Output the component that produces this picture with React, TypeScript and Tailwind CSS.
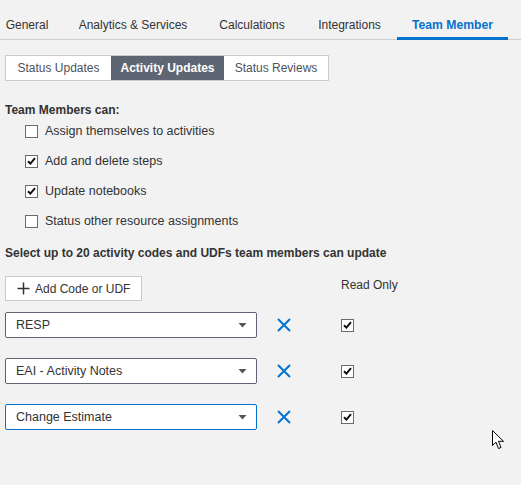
import React from "react";

const Check = ({ checked }: { checked: boolean }) => (
  <div className="w-[13px] h-[13px] border border-[#6b6b6b] bg-white flex items-center justify-center shrink-0">
    {checked && (
      <svg width="9" height="8" viewBox="0 0 9 8">
        <path d="M1 4.2 L3.4 6.6 L8 1.2" fill="none" stroke="#111" strokeWidth="2" />
      </svg>
    )}
  </div>
);

const tabs = [
  { label: "General", active: false, w: "w-[74px]" },
  { label: "Analytics & Services", active: false, w: "w-[138px]" },
  { label: "Calculations", active: false, w: "w-[100px]" },
  { label: "Integrations", active: false, w: "w-[95px]" },
  { label: "Team Member", active: true, w: "w-[111px]" },
];

const perms = [
  { label: "Assign themselves to activities", checked: false },
  { label: "Add and delete steps", checked: true },
  { label: "Update notebooks", checked: true },
  { label: "Status other resource assignments", checked: false },
];

const codes = [
  { label: "RESP", focused: false },
  { label: "EAI - Activity Notes", focused: false },
  { label: "Change Estimate", focused: true },
];

export default function App() {
  return (
    <div
      className="relative w-[521px] h-[485px] bg-[#f2f2f2] text-[12px] text-[#333333] overflow-hidden"
      style={{ fontFamily: '"Liberation Sans", Arial, sans-serif' }}
    >
      <div className="h-[40px] border-b border-[#cfcfcf]">
        <div className="flex -ml-[10px] h-[40px]">
          {tabs.map((t) => (
            <div
              key={t.label}
              className={
                t.active
                  ? `${t.w} text-center pt-[17px] leading-[16px] h-[40px] border-b-[3px] border-[#0572ce] text-[#0572ce] font-bold whitespace-nowrap text-[12.2px]`
                  : `${t.w} text-center pt-[17px] leading-[16px] h-[40px] whitespace-nowrap`
              }
            >
              {t.label}
            </div>
          ))}
        </div>
      </div>

      <div className="ml-[5px] mt-[15px] flex w-fit h-[26px] border border-[#c7ccd3] bg-white">
        <div className="w-[105px] flex items-center justify-center text-[#4d535e]">Status Updates</div>
        <div className="w-[113px] flex items-center justify-center bg-[#5f6673] text-white font-bold">
          Activity Updates
        </div>
        <div className="w-[104px] flex items-center justify-center text-[#4d535e]">Status Reviews</div>
      </div>

      <div className="ml-[5px] mt-[21px] leading-[16px] font-bold">Team Members can:</div>

      <div className="mt-[5px] ml-[25px] flex flex-col gap-[14px]">
        {perms.map((p) => (
          <div key={p.label} className="h-[16px] flex items-center gap-[7px] leading-[16px] text-[12.5px]">
            <Check checked={p.checked} />
            <span>{p.label}</span>
          </div>
        ))}
      </div>

      <div className="ml-[5px] mt-[16px] leading-[16px] font-bold">
        Select up to 20 activity codes and UDFs team members can update
      </div>

      <div className="mt-[15px] flex items-start">
        <div className="ml-[5px] w-[137px] h-[25px] border border-[#c7ccd3] bg-white flex items-center pl-[11px] gap-[5px]">
          <svg width="13" height="13" viewBox="0 0 13 13">
            <path d="M6.5 0.5 V12.5 M0.5 6.5 H12.5" stroke="#333" strokeWidth="1.5" fill="none" />
          </svg>
          <span>Add Code or UDF</span>
        </div>
        <div className="ml-[199px] leading-[16px] mt-[1px]">Read Only</div>
      </div>

      <div className="mt-[11px] flex flex-col gap-[20px]">
        {codes.map((c) => (
          <div key={c.label} className="flex items-center">
            <div
              className={
                c.focused
                  ? "ml-[5px] w-[252px] h-[26px] bg-white border border-[#0572ce] rounded-[2px] flex items-center justify-between pl-[10px] pr-[9px] text-[12.5px]"
                  : "ml-[5px] w-[252px] h-[26px] bg-white border border-[#5f6673] rounded-[2px] flex items-center justify-between pl-[10px] pr-[9px] text-[12.5px]"
              }
            >
              <span>{c.label}</span>
              <svg width="9" height="5" viewBox="0 0 9 5">
                <path d="M0.5 0 H8.5 L4.5 4.5 Z" fill="#555" />
              </svg>
            </div>
            <svg className="ml-[20px]" width="14" height="14" viewBox="0 0 14 14">
              <path d="M1 1 L13 13 M13 1 L1 13" stroke="#0572ce" strokeWidth="2" fill="none" />
            </svg>
            <div className="ml-[50px]">
              <Check checked={true} />
            </div>
          </div>
        ))}
      </div>

      <svg
        className="absolute left-[492px] top-[430px]"
        width="14"
        height="20"
        viewBox="0 0 14 20"
      >
        <path
          d="M0.5 0.5 L0.5 15.5 L4 12.2 L6.5 18.5 L9 17.5 L6.5 11.3 L11.5 11.3 Z"
          fill="white"
          stroke="black"
          strokeWidth="1"
          strokeLinejoin="miter"
        />
      </svg>
    </div>
  );
}
